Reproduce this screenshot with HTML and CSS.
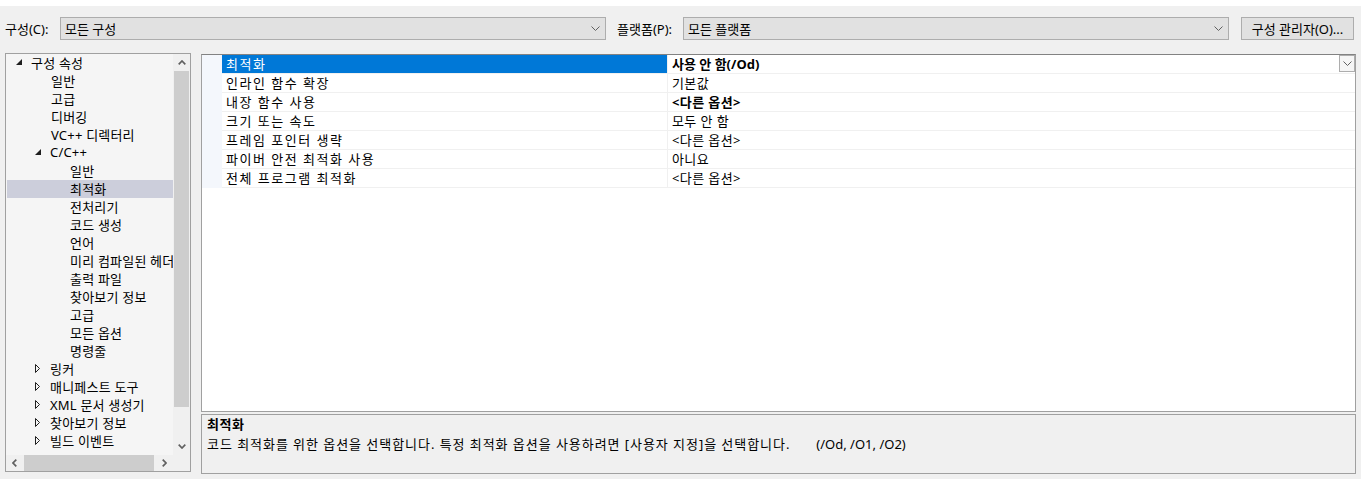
FILE: index.html
```html
<!DOCTYPE html>
<html lang="ko">
  <head>
    <meta charset="UTF-8" />
    <title>속성 페이지</title>
    <link rel="stylesheet" href="styles.css">
  </head>
  <body>
    <div class="top-strip"></div>

    <div class="toolbar">
      <span class="field-label cfg-label">구성(C):</span>
      <div class="combo">
        <span>모든 구성</span>
        <svg class="chev" width="9" height="5" viewBox="0 0 9 5"><polyline points="0.5,0.5 4.5,4.5 8.5,0.5" /></svg>
      </div>
      <span class="field-label plat-label">플랫폼(P):</span>
      <div class="combo">
        <span>모든 플랫폼</span>
        <svg class="chev" width="9" height="5" viewBox="0 0 9 5"><polyline points="0.5,0.5 4.5,4.5 8.5,0.5" /></svg>
      </div>
      <button class="cfg-btn" type="button">구성 관리자(O)...</button>
    </div>

    <div class="main">
      <!-- tree on the left -->
      <div class="tree">
        <ul class="tree-list">
          <li class="item l0"><span class="exp"><svg width="7" height="7" viewBox="0 0 7 7"><polygon points="6,0 6,6 0,6" /></svg></span>구성 속성</li>
          <li class="item l1">일반</li>
          <li class="item l1">고급</li>
          <li class="item l1">디버깅</li>
          <li class="item l1">VC++ 디렉터리</li>
          <li class="item l1e"><span class="exp"><svg width="7" height="7" viewBox="0 0 7 7"><polygon points="6,0 6,6 0,6" /></svg></span>C/C++</li>
          <li class="item l2">일반</li>
          <li class="item l2 selected">최적화</li>
          <li class="item l2">전처리기</li>
          <li class="item l2">코드 생성</li>
          <li class="item l2">언어</li>
          <li class="item l2">미리 컴파일된 헤더</li>
          <li class="item l2">출력 파일</li>
          <li class="item l2">찾아보기 정보</li>
          <li class="item l2">고급</li>
          <li class="item l2">모든 옵션</li>
          <li class="item l2">명령줄</li>
          <li class="item l1e"><span class="exp"><svg class="closed" width="6" height="10" viewBox="0 0 6 10"><polygon points="0.5,0.5 4.5,4.5 0.5,8.5" /></svg></span>링커</li>
          <li class="item l1e"><span class="exp"><svg class="closed" width="6" height="10" viewBox="0 0 6 10"><polygon points="0.5,0.5 4.5,4.5 0.5,8.5" /></svg></span>매니페스트 도구</li>
          <li class="item l1e"><span class="exp"><svg class="closed" width="6" height="10" viewBox="0 0 6 10"><polygon points="0.5,0.5 4.5,4.5 0.5,8.5" /></svg></span>XML 문서 생성기</li>
          <li class="item l1e"><span class="exp"><svg class="closed" width="6" height="10" viewBox="0 0 6 10"><polygon points="0.5,0.5 4.5,4.5 0.5,8.5" /></svg></span>찾아보기 정보</li>
          <li class="item l1e"><span class="exp"><svg class="closed" width="6" height="10" viewBox="0 0 6 10"><polygon points="0.5,0.5 4.5,4.5 0.5,8.5" /></svg></span>빌드 이벤트</li>
        </ul>

        <div class="vscroll">
          <div class="sb-btn"><svg width="8" height="5" viewBox="0 0 8 5"><polyline points="0.7,4.3 4,1 7.3,4.3" /></svg></div>
          <div class="vthumb"></div>
          <div class="sb-track"></div>
          <div class="sb-btn"><svg width="8" height="5" viewBox="0 0 8 5"><polyline points="0.7,0.7 4,4 7.3,0.7" /></svg></div>
        </div>

        <div class="hscroll">
          <div class="sb-btn"><svg width="5" height="8" viewBox="0 0 5 8"><polyline points="4.3,0.7 1,4 4.3,7.3" /></svg></div>
          <div class="hthumb"></div>
          <div class="sb-track"></div>
          <div class="sb-btn"><svg width="5" height="8" viewBox="0 0 5 8"><polyline points="0.7,0.7 4,4 0.7,7.3" /></svg></div>
        </div>

        <div class="corner"></div>
      </div>

      <div class="right">
        <!-- property grid -->
        <div class="grid">
          <div class="row selected">
            <div class="margin"></div>
            <div class="name">최적화</div>
            <div class="value bold tight">
              <span>사용 안 함(/Od)</span>
              <span class="drop"><svg width="9" height="5" viewBox="0 0 9 5"><polyline points="0.5,0.5 4.5,4.5 8.5,0.5" /></svg></span>
            </div>
          </div>
          <div class="row">
            <div class="margin"></div>
            <div class="name">인라인 함수 확장</div>
            <div class="value">기본값</div>
          </div>
          <div class="row">
            <div class="margin"></div>
            <div class="name">내장 함수 사용</div>
            <div class="value bold">&lt;다른 옵션&gt;</div>
          </div>
          <div class="row">
            <div class="margin"></div>
            <div class="name">크기 또는 속도</div>
            <div class="value">모두 안 함</div>
          </div>
          <div class="row">
            <div class="margin"></div>
            <div class="name">프레임 포인터 생략</div>
            <div class="value">&lt;다른 옵션&gt;</div>
          </div>
          <div class="row">
            <div class="margin"></div>
            <div class="name">파이버 안전 최적화 사용</div>
            <div class="value">아니요</div>
          </div>
          <div class="row">
            <div class="margin"></div>
            <div class="name">전체 프로그램 최적화</div>
            <div class="value">&lt;다른 옵션&gt;</div>
          </div>
        </div>

        <div class="desc">
          <div class="desc-title">최적화</div>
          <div class="desc-text">코드 최적화를 위한 옵션을 선택합니다. 특정 최적화 옵션을 사용하려면 [사용자 지정]을 선택합니다.<span class="switches">(/Od, /O1, /O2)</span></div>
        </div>
      </div>
    </div>
  </body>
</html>
```

FILE: styles.css
```css
* {
  box-sizing: border-box;
}

body {
  margin: 0;
  background: #f0f0f0;
  font-family: "Noto Sans", "Noto Sans CJK KR", sans-serif;
  font-size: 13px;
  color: #000;
  height: 479px;
  overflow: hidden;
}

.top-strip {
  height: 6px;
  background: #fff;
}

.toolbar {
  display: flex;
  align-items: center;
  height: 23px;
  margin-top: 11px;
  padding: 0 7px 0 5px;
}

.field-label {
  flex: none;
  white-space: nowrap;
}

.cfg-label {
  width: 55px;
}

.plat-label {
  width: 66px;
  margin-left: 11px;
}

.combo {
  flex: 1;
  height: 23px;
  display: flex;
  align-items: center;
  justify-content: space-between;
  padding: 0 5px 0 4px;
  background: #e1e1e1;
  border: 1px solid #adadad;
}

.chev polyline,
.drop polyline {
  fill: none;
  stroke: #606060;
  stroke-width: 1;
}

.cfg-btn {
  flex: none;
  width: 113px;
  height: 23px;
  margin-left: 12px;
  background: #e1e1e1;
  border: 1px solid #adadad;
  font-family: inherit;
  font-size: 13px;
  color: #000;
  padding: 0;
}

.main {
  display: flex;
  gap: 10px;
  margin-top: 13px;
  padding: 0 5px;
}

/* tree */
.tree {
  flex: none;
  width: 186px;
  height: 419px;
  border: 1px solid #a0a0a0;
  background: #f5f5f5;
  display: grid;
  grid-template-columns: 1fr 17px;
  grid-template-rows: 1fr 16px;
  overflow: hidden;
}

.tree-list {
  list-style: none;
  margin: 0;
  padding: 0 0 0 1px;
  overflow: hidden;
  letter-spacing: 0.2px;
}

.item {
  display: flex;
  align-items: center;
  height: 18px;
  padding-bottom: 2px;
  white-space: nowrap;
  overflow: hidden;
}

.item.selected {
  background: #cccedb;
}

.l0 {
  padding-left: 9px;
}

.l1 {
  padding-left: 44px;
}

.l1e {
  padding-left: 28px;
}

.l2 {
  padding-left: 63px;
}

.exp {
  display: inline-flex;
  align-items: center;
  width: 15px;
  flex: none;
  padding-top: 1px;
}

.exp polygon {
  fill: #1e1e1e;
}

.exp .closed polygon {
  fill: none;
  stroke: #1e1e1e;
  stroke-width: 1;
}

.vscroll {
  display: flex;
  flex-direction: column;
  background: #f0f0f0;
}

.hscroll {
  display: flex;
  background: #f0f0f0;
}

.sb-btn {
  flex: none;
  width: 17px;
  height: 17px;
  display: flex;
  align-items: center;
  justify-content: center;
}

.hscroll .sb-btn {
  height: 16px;
}

.sb-btn polyline {
  fill: none;
  stroke: #606060;
  stroke-width: 1.7;
}

.sb-track {
  flex: 1;
}

.vthumb {
  height: 336px;
  margin: 0 1px;
  background: #cdcdcd;
}

.hthumb {
  width: 130px;
  margin: 0 1px;
  background: #cdcdcd;
}

.corner {
  background: #f0f0f0;
}

/* right side */
.right {
  flex: 1;
  display: flex;
  flex-direction: column;
  gap: 2px;
  padding-top: 1px;
}

.grid {
  height: 358px;
  background: #fff;
  border: 1px solid #a0a0a0;
  border-top-color: #828282;
}

.row {
  display: grid;
  grid-template-columns: 20px 445px 1fr;
  height: 19px;
  line-height: 18px;
}

.margin {
  background: #f4f7fc;
}

.name,
.value {
  border-bottom: 1px solid #f0f0f0;
  white-space: nowrap;
  overflow: hidden;
}

.name {
  padding-left: 4px;
  letter-spacing: 1.5px;
}

.value {
  border-left: 1px solid #f0f0f0;
  padding-left: 4px;
  display: flex;
  align-items: center;
  letter-spacing: 0.4px;
}

.bold {
  font-weight: bold;
}

.value.tight {
  letter-spacing: 0;
}

.row.selected .name {
  background: #0078d7;
  color: #fff;
}

.drop {
  margin-left: auto;
  width: 16px;
  height: 17px;
  border: 1px solid #adadad;
  background: #f5f5f5;
  display: flex;
  align-items: center;
  justify-content: center;
  margin-top: -1px;
}

.desc {
  height: 60px;
  border: 1px solid #a0a0a0;
  background: #f0f0f0;
  padding: 0 5px;
  line-height: 18px;
}

.desc-title {
  font-weight: bold;
  letter-spacing: 0.5px;
}

.desc-text {
  margin-top: 2px;
  letter-spacing: 0.95px;
}

.switches {
  margin-left: 26px;
  letter-spacing: 0;
}
```
